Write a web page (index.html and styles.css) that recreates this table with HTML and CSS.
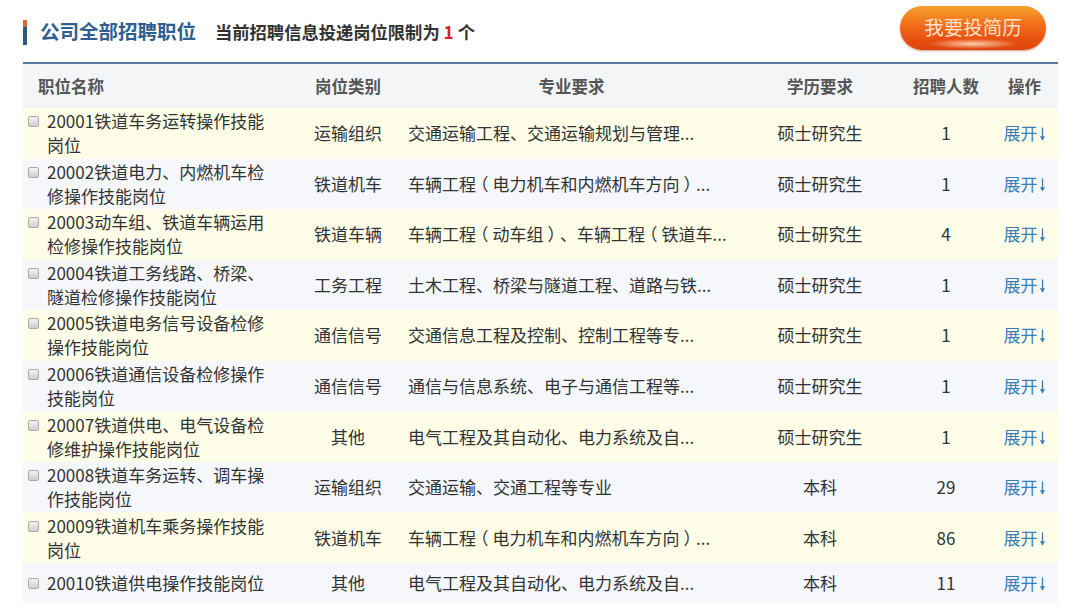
FILE: index.html
```html
<!DOCTYPE html>
<html lang="zh-CN">
<head>
<meta charset="utf-8">
<link rel="stylesheet" href="styles.css">
</head>
<body>
<svg width="0" height="0" class="defs" aria-hidden="true">
  <symbol id="down" viewBox="0 0 7 14">
    <path d="M3.5 0.5V12.5" stroke="currentColor" stroke-width="1.3" fill="none"/>
    <path d="M0.9 9.3L3.5 13.4L6.1 9.3Z" fill="currentColor"/>
  </symbol>
</svg>
<div class="page">
  <div class="topbar">
    <span class="marker"></span>
    <h1 class="title">公司全部招聘职位</h1>
    <span class="limit">当前招聘信息投递岗位限制为 <em>1</em> 个</span>
    <button class="apply">我要投简历</button>
  </div>
  <div class="table">
    <div class="row head">
      <div class="c1">职位名称</div>
      <div class="c2">岗位类别</div>
      <div class="c3 hc">专业要求</div>
      <div class="c4">学历要求</div>
      <div class="c5">招聘人数</div>
      <div class="c6">操作</div>
    </div>
    <div class="row odd">
      <div class="c1"><span class="cb"></span><span class="name">20001铁道车务运转操作技能岗位</span></div>
      <div class="c2">运输组织</div>
      <div class="c3">交通运输工程、交通运输规划与管理...</div>
      <div class="c4">硕士研究生</div>
      <div class="c5">1</div>
      <div class="c6"><a class="more">展开<svg class="arr"><use href="#down"/></svg></a></div>
    </div>
    <div class="row even">
      <div class="c1"><span class="cb"></span><span class="name">20002铁道电力、内燃机车检修操作技能岗位</span></div>
      <div class="c2">铁道机车</div>
      <div class="c3">车辆工程<span class="pr">（</span>电力机车和内燃机车方向<span class="pr">）</span>...</div>
      <div class="c4">硕士研究生</div>
      <div class="c5">1</div>
      <div class="c6"><a class="more">展开<svg class="arr"><use href="#down"/></svg></a></div>
    </div>
    <div class="row odd">
      <div class="c1"><span class="cb"></span><span class="name">20003动车组、铁道车辆运用检修操作技能岗位</span></div>
      <div class="c2">铁道车辆</div>
      <div class="c3">车辆工程<span class="pr">（</span>动车组<span class="pr">）</span>、车辆工程<span class="pr">（</span>铁道车...</div>
      <div class="c4">硕士研究生</div>
      <div class="c5">4</div>
      <div class="c6"><a class="more">展开<svg class="arr"><use href="#down"/></svg></a></div>
    </div>
    <div class="row even">
      <div class="c1"><span class="cb"></span><span class="name">20004铁道工务线路、桥梁、隧道检修操作技能岗位</span></div>
      <div class="c2">工务工程</div>
      <div class="c3">土木工程、桥梁与隧道工程、道路与铁...</div>
      <div class="c4">硕士研究生</div>
      <div class="c5">1</div>
      <div class="c6"><a class="more">展开<svg class="arr"><use href="#down"/></svg></a></div>
    </div>
    <div class="row odd">
      <div class="c1"><span class="cb"></span><span class="name">20005铁道电务信号设备检修操作技能岗位</span></div>
      <div class="c2">通信信号</div>
      <div class="c3">交通信息工程及控制、控制工程等专...</div>
      <div class="c4">硕士研究生</div>
      <div class="c5">1</div>
      <div class="c6"><a class="more">展开<svg class="arr"><use href="#down"/></svg></a></div>
    </div>
    <div class="row even">
      <div class="c1"><span class="cb"></span><span class="name">20006铁道通信设备检修操作技能岗位</span></div>
      <div class="c2">通信信号</div>
      <div class="c3">通信与信息系统、电子与通信工程等...</div>
      <div class="c4">硕士研究生</div>
      <div class="c5">1</div>
      <div class="c6"><a class="more">展开<svg class="arr"><use href="#down"/></svg></a></div>
    </div>
    <div class="row odd">
      <div class="c1"><span class="cb"></span><span class="name">20007铁道供电、电气设备检修维护操作技能岗位</span></div>
      <div class="c2">其他</div>
      <div class="c3">电气工程及其自动化、电力系统及自...</div>
      <div class="c4">硕士研究生</div>
      <div class="c5">1</div>
      <div class="c6"><a class="more">展开<svg class="arr"><use href="#down"/></svg></a></div>
    </div>
    <div class="row even">
      <div class="c1"><span class="cb"></span><span class="name">20008铁道车务运转、调车操作技能岗位</span></div>
      <div class="c2">运输组织</div>
      <div class="c3">交通运输、交通工程等专业</div>
      <div class="c4">本科</div>
      <div class="c5">29</div>
      <div class="c6"><a class="more">展开<svg class="arr"><use href="#down"/></svg></a></div>
    </div>
    <div class="row odd">
      <div class="c1"><span class="cb"></span><span class="name">20009铁道机车乘务操作技能岗位</span></div>
      <div class="c2">铁道机车</div>
      <div class="c3">车辆工程<span class="pr">（</span>电力机车和内燃机车方向<span class="pr">）</span>...</div>
      <div class="c4">本科</div>
      <div class="c5">86</div>
      <div class="c6"><a class="more">展开<svg class="arr"><use href="#down"/></svg></a></div>
    </div>
    <div class="row even short">
      <div class="c1"><span class="cb"></span><span class="name">20010铁道供电操作技能岗位</span></div>
      <div class="c2">其他</div>
      <div class="c3">电气工程及其自动化、电力系统及自...</div>
      <div class="c4">本科</div>
      <div class="c5">11</div>
      <div class="c6"><a class="more">展开<svg class="arr"><use href="#down"/></svg></a></div>
    </div>
  </div>
</div>
</body>
</html>
```

FILE: styles.css
```css
html, body {
  margin: 0;
  padding: 0;
  background: #ffffff;
}
body {
  font-family: "Noto Sans CJK SC", "Microsoft YaHei", sans-serif;
  color: #333333;
  font-size: 17px;
  overflow: hidden;
}
.defs { position: absolute; }
.page {
  width: 1035px;
  margin-left: 23px;
}
.topbar {
  height: 62px;
  display: flex;
  align-items: center;
}
.marker {
  width: 4px;
  height: 25px;
  margin-top: 2px;
  background: linear-gradient(#e4652a 0 30%, #2c5a86 30% 100%);
}
.title {
  margin: 0 0 0 13px;
  font-size: 19.5px;
  font-weight: 700;
  color: #2d5f90;
  line-height: 1;
}
.limit {
  margin-left: 19px;
  font-size: 17.3px;
  font-weight: 700;
  color: #333;
}
.limit em {
  font-style: normal;
  color: #d8232a;
}
.apply {
  align-self: flex-start;
  margin: 6px 12px 0 auto;
  width: 146px;
  height: 44px;
  border: none;
  border-radius: 22px;
  font-family: inherit;
  font-size: 19.5px;
  color: #fde2cc;
  background:
    radial-gradient(ellipse 45px 5px at 50% 86%, rgba(255, 230, 200, 0.85), rgba(255, 200, 150, 0) 100%),
    linear-gradient(#f6a12c 0%, #f2711d 40%, #e8500f 75%, #dc4510 100%);
  box-shadow: 0 1px 2px rgba(160, 60, 10, 0.5);
  padding: 0 0 3px;
}
.table {
  border-top: 2px solid #57799f;
}
.row {
  display: grid;
  grid-template-columns: 275px 100px 347px 150px 102px 1fr;
  align-items: center;
  height: 50.55px;
  line-height: 24px;
}
.row.short { height: 40px; }
.row.head {
  height: 44px;
  background: #f4f5f7;
  color: #555555;
  font-weight: 700;
  font-size: 16.5px;
}
.row.odd { background: #fefee8; }
.row.even { background: #f5f7fb; }
.c1 {
  padding-left: 5px;
  padding-right: 25px;
  display: flex;
  align-items: flex-start;
}
.head .c1 { padding-left: 15px; }
.cb {
  flex: none;
  width: 9px;
  height: 9px;
  margin-top: 7px;
  margin-right: 8px;
  border: 1px solid #a9a9a9;
  border-radius: 2px;
  background: linear-gradient(#f2f2f2, #cfcfcf);
}
.name { flex: 1; }
.c2, .c4, .c5, .c6 { text-align: center; }
.c3 { padding-left: 10px; white-space: nowrap; }
.c3.hc { padding-left: 0; text-align: center; }
.pr {
  font-feature-settings: "halt" 1;
  padding: 0 4px;
}
.c6 { padding-right: 6px; }
.more { color: #3b7eb6; cursor: pointer; }
.arr {
  width: 7px;
  height: 14px;
  margin-left: 1px;
  vertical-align: -1px;
}
```
